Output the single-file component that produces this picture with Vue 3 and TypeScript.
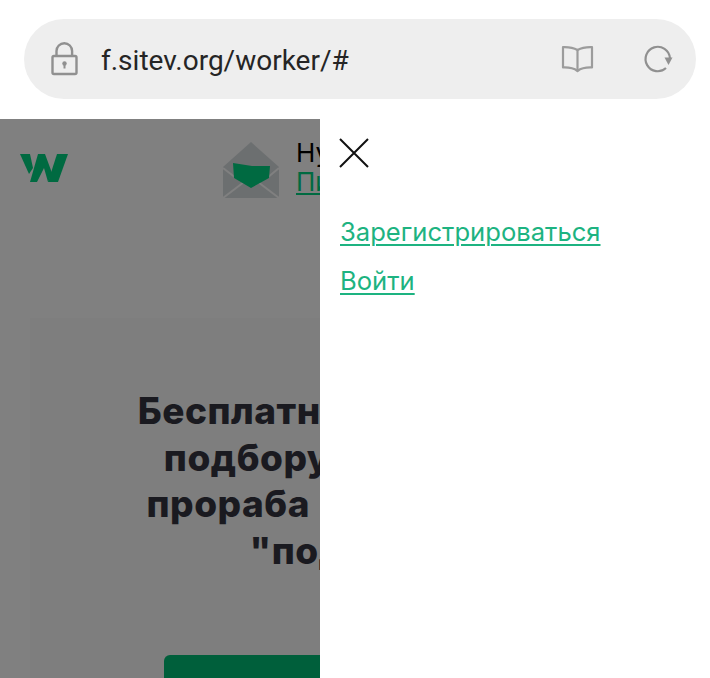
<script setup lang="ts">
const url = 'f.sitev.org/worker/#'
</script>

<template>
  <div class="screen">
    <div class="browser">
      <div class="pill">
        <svg class="lock" width="30" height="34" viewBox="0 0 30 34" fill="none" stroke="#909090" stroke-width="2.4">
          <path d="M6.500 14V9a7.800 7.800 0 0 1 15.600 0V14" />
          <rect x="2.500" y="14" width="24" height="18" rx="1.500" />
          <circle cx="14.500" cy="21.500" r="2.200" fill="#909090" stroke="none" />
          <rect x="13.500" y="21.500" width="2" height="5" fill="#909090" stroke="none" />
        </svg>
        <span class="url">{{ url }}</span>
        <svg class="book" width="34" height="30" viewBox="0 0 34 30" fill="none" stroke="#9c9c9c" stroke-width="2.200" stroke-linejoin="round">
          <path d="M16.500 6C12.500 3.800 7 3 2 3.200V23.500C7 23.300 12.500 24 16.500 27C20.500 24 26 23.300 31 23.500V3.200C26 3 20.500 3.800 16.500 6Z" />
          <path d="M16.500 6V27" />
        </svg>
        <svg class="reload" width="30" height="30" viewBox="0 0 30 30" fill="none">
          <path d="M23 24A12.200 12.200 0 1 1 26.900 14" stroke="#909090" stroke-width="2.200" />
          <path d="M21.500 13.500L29.500 13.500L25.500 21Z" fill="#909090" />
        </svg>
      </div>
    </div>

    <div class="stage">
      <section class="page">
        <div class="page-inner">
          <header class="head">
            <svg class="logo" width="48" height="28" viewBox="0 0 48 28">
              <path fill="#006a41" d="M0 0H10L13 14L9 20Z" />
              <path fill="#006a41" d="M18 0H25L32 19L28 28L24 14L17 28H10Z" />
              <path fill="#006a41" d="M37 0H48L38 28H28Z" />
            </svg>
            <svg class="envelope" width="58" height="58" viewBox="0 0 58 58">
              <path fill="#6c6f70" d="M1 26L29 1L57 26V57H1Z" />
              <path fill="none" stroke="#808080" stroke-width="2" d="M1 27L14 37M57 27L45 37M1 57L22 41M57 57L36 41" />
              <path fill="#006a41" d="M11 22L30 25L48 25L47 37L29 47L12 37Z" />
            </svg>
            <div class="notice">
              <div class="notice-title">Нужен мастер?</div>
              <a class="notice-link">Пишите нам</a>
            </div>
          </header>
          <div class="card">
            <h1 class="title">
              <span class="line line-first">Бесплатный сервис по</span>
              <span class="line line-second">подбору бригады и</span>
              <span class="line line-third">прораба для ремонта</span>
              <span class="line line-last">"под ключ"</span>
            </h1>
            <div class="cta"></div>
          </div>
        </div>
      </section>

      <aside class="panel">
        <svg class="close" width="30" height="30" viewBox="0 0 30 30" stroke="#111" stroke-width="2" fill="none">
          <path d="M1 1L29 29M29 1L1 29" />
        </svg>
        <nav class="links">
          <a class="link">Зарегистрироваться</a>
          <a class="link">Войти</a>
        </nav>
      </aside>
    </div>
  </div>
</template>

<style scoped>
.screen {
  width: 710px;
  height: 678px;
  overflow: hidden;
  background: #fff;
  font-family: Inter, "Noto Sans", sans-serif;
}
.browser {
  height: 119px;
  box-sizing: border-box;
  padding: 19px 14px 0 24px;
}
.pill {
  height: 80px;
  border-radius: 40px;
  background: #eeeeee;
  display: flex;
  align-items: center;
  padding: 0 23px 0 26px;
}
.lock { flex: none; margin-top: -1px; }
.url {
  margin-left: 21px;
  padding-top: 2px;
  font-family: Roboto, sans-serif;
  font-size: 28px;
  color: #252525;
  flex: 1;
}
.book { flex: none; margin-right: 48px; }
.reload { flex: none; }
.stage {
  display: flex;
  height: 559px;
}
.page {
  width: 320px;
  flex: none;
  overflow: hidden;
  background: #808080;
}
.page-inner { width: 710px; }
.head {
  height: 199px;
  box-sizing: border-box;
  padding: 20px 0 0 20px;
  display: flex;
  align-items: flex-start;
}
.logo { flex: none; margin-top: 15px; }
.envelope { flex: none; margin-left: 154px; margin-top: 2px; }
.notice { margin-left: 16px; font-size: 26px; line-height: 29px; color: #000; margin-top: -1px; }
.notice-link { color: #006a41; text-decoration: underline; }
.card {
  margin: 0 30px;
  background: #7e7e7e;
  height: 400px;
  text-align: center;
  padding-top: 70px;
  box-sizing: border-box;
}
.title {
  margin: 0;
  font-size: 37px;
  line-height: 46.500px;
  font-weight: 800;
  letter-spacing: 0.5px;
  color: #1a1a20;
  white-space: nowrap;
}
.line { display: block; }
.line-first { padding-left: 6px; }
.line-second { padding-right: 7px; }
.line-third { padding-left: 12px; word-spacing: 5px; }
.line-last { padding-left: 16px; }
.cta {
  margin: 81px 0 0 134px;
  width: 382px;
  height: 60px;
  border-radius: 6px 6px 0 0;
  background: #005f3b;
}
.panel {
  flex: 1;
  background: #fff;
  padding: 20px 20px;
}
.close { display: block; margin-left: -1px; margin-top: -1px; }
.links {
  margin-top: 48px;
  display: flex;
  flex-direction: column;
  align-items: flex-start;
  gap: 17px;
}
.link {
  font-size: 25.600px;
  line-height: 32px;
  color: #1db381;
  text-decoration: underline;
  text-decoration-thickness: 2px;
  text-underline-offset: 3px;
}
</style>
